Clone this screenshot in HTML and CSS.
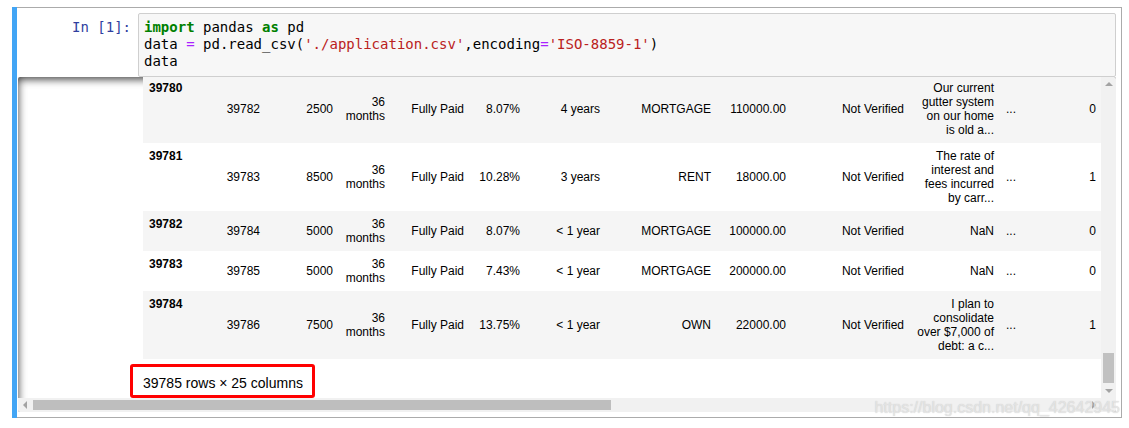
FILE: index.html
```html
<!DOCTYPE html>
<html>
<head>
<meta charset="utf-8">
<title>Notebook</title>
<link rel="stylesheet" href="styles.css">
</head>
<body>
<div class="cell">
  <div class="input">
    <div class="prompt">In&nbsp;[1]:</div>
    <div class="code"><div class="line"><span class="kw">import</span> pandas <span class="kw">as</span> pd</div><div class="line">data <span class="op">=</span> pd.read_csv(<span class="str">'./application.csv'</span>,encoding<span class="op">=</span><span class="str">'ISO-8859-1'</span>)</div><div class="line">data</div></div>
  </div>
  <div class="output-scroll">
    <div class="viewport">
      <div class="out-prompt"></div>
      <div class="subarea">
        <table class="df">
          <colgroup>
            <col class="w57"><col class="w66"><col class="w73"><col class="w52"><col class="w79"><col class="w56"><col class="w80"><col class="w111"><col class="w75"><col class="w118"><col class="w90"><col class="w22"><col class="w80">
          </colgroup>
          <tbody>
            <tr><th>39780</th><td>39782</td><td>2500</td><td>36 months</td><td>Fully Paid</td><td>8.07%</td><td>4 years</td><td>MORTGAGE</td><td>110000.00</td><td>Not Verified</td><td>Our current gutter system on our home is old a...</td><td>...</td><td>0</td></tr>
            <tr><th>39781</th><td>39783</td><td>8500</td><td>36 months</td><td>Fully Paid</td><td>10.28%</td><td>3 years</td><td>RENT</td><td>18000.00</td><td>Not Verified</td><td>The rate of interest and fees incurred by carr...</td><td>...</td><td>1</td></tr>
            <tr><th>39782</th><td>39784</td><td>5000</td><td>36 months</td><td>Fully Paid</td><td>8.07%</td><td>&lt; 1 year</td><td>MORTGAGE</td><td>100000.00</td><td>Not Verified</td><td>NaN</td><td>...</td><td>0</td></tr>
            <tr><th>39783</th><td>39785</td><td>5000</td><td>36 months</td><td>Fully Paid</td><td>7.43%</td><td>&lt; 1 year</td><td>MORTGAGE</td><td>200000.00</td><td>Not Verified</td><td>NaN</td><td>...</td><td>0</td></tr>
            <tr><th>39784</th><td>39786</td><td>7500</td><td>36 months</td><td>Fully Paid</td><td>13.75%</td><td>&lt; 1 year</td><td>OWN</td><td>22000.00</td><td>Not Verified</td><td>I plan to consolidate over $7,000 of debt: a c...</td><td>...</td><td>1</td></tr>
          </tbody>
        </table>
        <p class="shape"><span class="marked">39785 rows × 25 columns</span></p>
      </div>
    </div>
    <div class="vscroll">
      <div class="sbtn"><span class="arrow up"></span></div>
      <div class="vtrack"><div class="vthumb"></div></div>
      <div class="sbtn"><span class="arrow down"></span></div>
    </div>
    <div class="hscroll">
      <div class="sbtn"><span class="arrow left"></span></div>
      <div class="htrack"><div class="hthumb"></div></div>
      <div class="sbtn"><span class="arrow right"></span></div>
    </div>
    <div class="corner"></div>
  </div>
</div>
<div class="watermark">https://blog.csdn.net/qq_42642945</div>
</body>
</html>
```
FILE: styles.css
```css
html, body {
  margin: 0;
  padding: 0;
  background: #ffffff;
}

body {
  font-family: "Liberation Sans", Arial, sans-serif;
  color: #000;
  position: relative;
  height: 428px;
  overflow: hidden;
}

.cell {
  position: relative;
  box-sizing: border-box;
  width: 1110px;
  margin: 7px 0 0 12px;
  border: 1px solid #ababab;
  padding: 5px;
}

.cell::before {
  content: "";
  position: absolute;
  left: -1px;
  top: -1px;
  width: 5px;
  height: calc(100% + 2px);
  background: #42a5f5;
}

.input {
  display: flex;
  height: 64px;
}

.prompt {
  width: 120px;
  box-sizing: border-box;
  flex: none;
  text-align: right;
  padding: 6px 7px 0 0;
  font-family: "DejaVu Sans Mono", monospace;
  font-size: 14px;
  line-height: 17px;
  color: #303f9f;
}

.code {
  flex: 1;
  box-sizing: border-box;
  border: 1px solid #cfcfcf;
  border-radius: 2px;
  background: #f7f7f7;
  padding: 5px 5px 6px;
  font-family: "DejaVu Sans Mono", monospace;
  font-size: 14px;
  line-height: 17px;
  color: #000;
  white-space: pre;
}

.kw { color: #008000; font-weight: bold; }
.op { color: #aa22ff; }
.str { color: #ba2121; }

.output-scroll {
  display: grid;
  grid-template-columns: 1fr 15px;
  grid-template-rows: 321px 14px;
  height: 335px;
  box-shadow: inset 0 2px 8px rgba(0, 0, 0, 0.8);
  border-radius: 2px;
  overflow: hidden;
}

.viewport {
  display: flex;
  overflow: hidden;
  min-width: 0;
}

.out-prompt {
  width: 120px;
  flex: none;
}

.subarea {
  padding-left: 5px;
  margin-top: -2px;
  flex: none;
}

.df {
  border-collapse: collapse;
  table-layout: fixed;
  width: 959px;
  font-size: 12px;
  line-height: 14px;
  color: #000;
}

.df th, .df td {
  padding: 6px;
  border: none;
}

.df th {
  font-weight: bold;
  text-align: left;
  vertical-align: top;
}

.df td {
  text-align: right;
  vertical-align: middle;
}

.df tr:nth-child(odd) { background: #f5f5f5; }

.w57 { width: 57px; }
.w66 { width: 66px; }
.w73 { width: 73px; }
.w52 { width: 52px; }
.w79 { width: 79px; }
.w56 { width: 56px; }
.w80 { width: 80px; }
.w111 { width: 111px; }
.w75 { width: 75px; }
.w118 { width: 118px; }
.w90 { width: 90px; }
.w22 { width: 22px; }

.shape {
  margin: 14px 0 0;
  font-size: 14px;
  line-height: 20px;
}

.marked {
  position: relative;
  display: inline-block;
}

.marked::after {
  content: "";
  position: absolute;
  left: -13px;
  right: -12px;
  top: -9px;
  bottom: -5px;
  border: 3px solid #ff0000;
  border-radius: 3px;
}

.vscroll {
  display: flex;
  flex-direction: column;
  background: #f1f1f1;
}

.hscroll {
  display: flex;
  background: #f1f1f1;
}

.corner { background: #f1f1f1; }

.sbtn {
  flex: none;
  width: 15px;
  height: 14px;
  display: flex;
  align-items: center;
  justify-content: center;
}

.hscroll .sbtn { width: 14px; }

.vtrack {
  flex: 1;
  display: flex;
  flex-direction: column;
  justify-content: flex-end;
  padding: 0 2px 1px 2px;
}

.vthumb {
  height: 30px;
  background: #c1c1c1;
}

.htrack {
  flex: 1;
  display: flex;
  align-items: center;
  padding-left: 1px;
}

.hthumb {
  width: 578px;
  height: 10px;
  background: #bebebe;
}

.arrow {
  width: 0;
  height: 0;
  border-style: solid;
  border-color: transparent;
}

.arrow.up { border-width: 0 4px 4px 4px; border-bottom-color: #a3a3a3; }
.arrow.down { border-width: 4px 4px 0 4px; border-top-color: #a3a3a3; }
.arrow.left { border-width: 4px 4px 4px 0; border-right-color: #a3a3a3; }
.arrow.right { border-width: 4px 0 4px 4px; border-left-color: #a3a3a3; }

.watermark {
  position: absolute;
  right: 9px;
  top: 398px;
  font-family: "Liberation Sans", Arial, sans-serif;
  font-size: 16px;
  line-height: 20px;
  color: rgba(235, 235, 235, 0.75);
  text-shadow: 0 0 1px rgba(140, 140, 140, 0.45);
  white-space: nowrap;
}
```
